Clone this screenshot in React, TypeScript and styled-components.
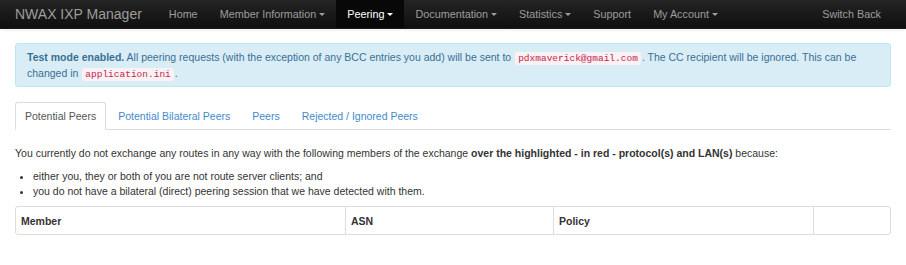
import styled, { createGlobalStyle, css } from "styled-components";

const GlobalStyle = createGlobalStyle`
  body {
    margin: 0;
    background: #fff;
    font-family: "Liberation Sans", Arial, Helvetica, sans-serif;
    font-size: 10.5px;
    color: #333;
  }
`;

const Navbar = styled.div`
  display: flex;
  align-items: stretch;
  height: 28px;
  background: linear-gradient(to bottom, #242424, #0f0f0f);
  border-bottom: 1px solid #1a1a1a;
  box-shadow: 0 1px 3px rgba(0, 0, 0, 0.08);
`;

const Brand = styled.div`
  display: flex;
  align-items: center;
  padding: 0 16px 0 15px;
  font-size: 14px;
  color: #9d9d9d;
`;

const NavItem = styled.div<{ $active?: boolean; $end?: boolean }>`
  display: flex;
  align-items: center;
  padding: 0 ${(p) => (p.$end ? "25px" : "11px")} 0 11px;
  font-size: 10.8px;
  color: #9d9d9d;
  ${(p) =>
    p.$active &&
    css`
      background: #080808;
      color: #fff;
    `}
`;

const Caret = styled.span`
  display: inline-block;
  margin-left: 3px;
  width: 0;
  height: 0;
  border-top: 3px solid currentColor;
  border-left: 3px solid transparent;
  border-right: 3px solid transparent;
  vertical-align: middle;
`;

const Spacer = styled.div`
  flex: 1;
`;

const Container = styled.div`
  padding: 0 15px;
`;

const Alert = styled.div`
  margin-top: 14px;
  padding: 5px 11px 5px;
  background: #d9edf7;
  border: 1px solid #bce8f1;
  border-radius: 3px;
  color: #3a6f94;
  line-height: 16px;
`;

const Code = styled.code`
  font-family: "Liberation Mono", "DejaVu Sans Mono", monospace;
  font-size: 9.5px;
  line-height: 12px;
  color: #c7254e;
  background: #f9f2f4;
  padding: 1px 3px;
  margin: 0 1px;
  border-radius: 3px;
`;

const Tabs = styled.div`
  display: flex;
  margin-top: 15px;
  border-bottom: 1px solid #ddd;
  height: 27px;
`;

const Tab = styled.div<{ $active?: boolean }>`
  display: flex;
  align-items: center;
  padding: 0 9px;
  margin-right: 2px;
  margin-bottom: -1px;
  border: 1px solid transparent;
  border-radius: 3px 3px 0 0;
  color: #428bca;
  ${(p) =>
    p.$active &&
    css`
      color: #555;
      background: #fff;
      border-color: #ddd #ddd transparent;
    `}
`;

const Intro = styled.p`
  margin: 15px 0 0;
  line-height: 16px;
`;

const List = styled.ul`
  margin: 8px 0 0;
  padding-left: 18px;
  line-height: 15px;
`;

const Table = styled.div`
  display: grid;
  grid-template-columns: 330px 208px 260px 1fr;
  margin-top: 7px;
  border: 1px solid #ddd;
  border-radius: 3px;
  height: 27px;
`;

const Th = styled.div<{ $last?: boolean }>`
  display: flex;
  align-items: center;
  padding: 0 5px;
  font-weight: bold;
  font-size: 10.5px;
  border-right: ${(p) => (p.$last ? "none" : "1px solid #ddd")};
`;

const navItems = [
  { label: "Home" },
  { label: "Member Information", caret: true },
  { label: "Peering", caret: true, active: true },
  { label: "Documentation", caret: true },
  { label: "Statistics", caret: true },
  { label: "Support" },
  { label: "My Account", caret: true },
];

export default function App() {
  return (
    <>
      <GlobalStyle />
      <Navbar>
        <Brand>NWAX IXP Manager</Brand>
        {navItems.map((item) => (
          <NavItem key={item.label} $active={item.active}>
            {item.label}
            {item.caret && <Caret />}
          </NavItem>
        ))}
        <Spacer />
        <NavItem $end>Switch Back</NavItem>
      </Navbar>
      <Container>
        <Alert>
          <b>Test mode enabled.</b> All peering requests (with the exception of
          any BCC entries you add) will be sent to{" "}
          <Code>pdxmaverick@gmail.com</Code>. The CC recipient will be ignored.
          This can be changed in <Code>application.ini</Code>.
        </Alert>
        <Tabs>
          <Tab $active>Potential Peers</Tab>
          <Tab>Potential Bilateral Peers</Tab>
          <Tab>Peers</Tab>
          <Tab>Rejected / Ignored Peers</Tab>
        </Tabs>
        <Intro>
          You currently do not exchange any routes in any way with the following
          members of the exchange{" "}
          <b>over the highlighted - in red - protocol(s) and LAN(s)</b> because:
        </Intro>
        <List>
          <li>either you, they or both of you are not route server clients; and</li>
          <li>
            you do not have a bilateral (direct) peering session that we have
            detected with them.
          </li>
        </List>
        <Table>
          <Th>Member</Th>
          <Th>ASN</Th>
          <Th>Policy</Th>
          <Th $last />
        </Table>
      </Container>
    </>
  );
}
